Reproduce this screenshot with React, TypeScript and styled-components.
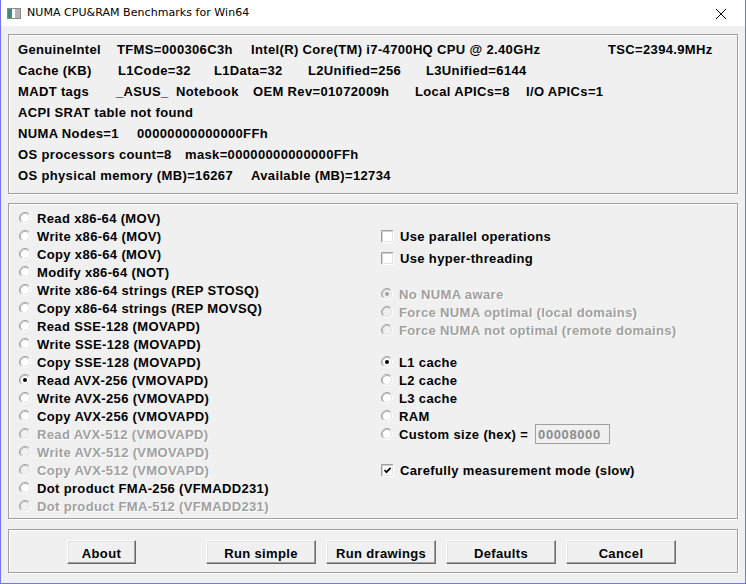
import React from "react";
import styled, { createGlobalStyle } from "styled-components";

const Global = createGlobalStyle`
  html, body { margin: 0; padding: 0; background: #f0f0f0; }
  body { font-family: "Liberation Sans", Arial, sans-serif; }
`;

const Window = styled.div`
  width: 746px;
  height: 584px;
  box-sizing: border-box;
  border: 1px solid #7474f2;
  border-top: none;
  background: #f0f0f0;
  display: flex;
  flex-direction: column;
`;

const TitleBar = styled.div`
  height: 26px;
  flex: none;
  background: #ffffff;
  display: flex;
  align-items: center;
  padding-left: 5px;
  padding-right: 12px;
`;

const TitleText = styled.span`
  font-family: "DejaVu Sans", "Noto Sans", sans-serif;
  font-size: 11px;
  letter-spacing: 0.05px;
  color: #000;
  margin-left: 5px;
  flex: 1;
  padding-bottom: 1px;
`;

const CloseBtn = styled.div`
  width: 14px;
  height: 14px;
  display: flex;
  align-items: center;
  justify-content: center;
  margin-right: 5px;
  margin-top: 1px;
`;

const Body = styled.div`
  flex: 1;
  display: flex;
  flex-direction: column;
  padding: 8px 7px 0 7px;
`;

const Group = styled.div<{ $h: number; $mt?: number }>`
  box-sizing: border-box;
  height: ${(p) => p.$h}px;
  margin-top: ${(p) => p.$mt ?? 0}px;
  border: 1px solid #a0a0a0;
  box-shadow: 1px 1px 0 #ffffff, inset 1px 1px 0 #ffffff;
  font-weight: bold;
  font-size: 13px;
  letter-spacing: 0.35px;
  color: #000;
`;

const InfoGroup = styled(Group)`
  padding: 4px 0 0 9px;
`;

const InfoRow = styled.div`
  height: 21px;
  display: flex;
  align-items: center;
  white-space: nowrap;
`;

const Field = styled.span<{ $w?: number }>`
  flex: none;
  width: ${(p) => (p.$w ? `${p.$w}px` : "auto")};
`;

const OptionsGroup = styled(Group)`
  padding: 5px 0 0 10px;
  display: grid;
  grid-template-columns: 362px 1fr;
  align-items: start;
`;

const Column = styled.div`
  display: flex;
  flex-direction: column;
`;

const Row = styled.div<{ $mt?: number; $disabled?: boolean }>`
  height: 18px;
  display: flex;
  align-items: center;
  white-space: nowrap;
  margin-top: ${(p) => p.$mt ?? 0}px;
  color: ${(p) => (p.$disabled ? "#a0a0a0" : "#000")};
  text-shadow: ${(p) => (p.$disabled ? "1px 1px 0 #ffffff" : "none")};
`;

const Label = styled.span`
  margin-left: 6px;
`;

const HexBox = styled.div`
  box-sizing: border-box;
  width: 75px;
  height: 20px;
  margin-left: 7px;
  border: 1px solid #a0a0a0;
  background: #f0f0f0;
  color: #8c8c8c;
  font-weight: bold;
  display: flex;
  align-items: center;
  padding-left: 2px;
  letter-spacing: 0.6px;
`;

const ButtonGroup = styled(Group)`
  display: flex;
  align-items: flex-start;
  padding: 10px 0 0 58px;
  gap: 10px;
`;

const Button = styled.button<{ $w: number; $ml?: number }>`
  box-sizing: border-box;
  width: ${(p) => p.$w}px;
  height: 24px;
  margin-left: ${(p) => p.$ml ?? 0}px;
  background: #f0f0f0;
  border: 1px solid;
  border-color: #ffffff #696969 #696969 #ffffff;
  box-shadow: inset -1px -1px 0 #a0a0a0, inset 1px 1px 0 #e3e3e3;
  font-family: "Liberation Sans", Arial, sans-serif;
  font-weight: bold;
  font-size: 13px;
  letter-spacing: 0.35px;
  color: #000;
  padding: 2px 0 0 0;
  cursor: default;
`;

function Radio({ checked, disabled }: { checked?: boolean; disabled?: boolean }) {
  return (
    <svg width="12" height="12" viewBox="0 0 12 12" style={{ flex: "none" }}>
      <circle cx="6" cy="6" r="4.5" fill={disabled ? "#f0f0f0" : "#ffffff"} />
      <path d="M2.11 9.89 A5.5 5.5 0 0 1 9.89 2.11" stroke="#a0a0a0" strokeWidth="1" fill="none" />
      <path d="M9.89 2.11 A5.5 5.5 0 0 1 2.11 9.89" stroke="#ffffff" strokeWidth="1" fill="none" />
      <path d="M2.82 9.18 A4.5 4.5 0 0 1 9.18 2.82" stroke="#bcbcbc" strokeWidth="1" fill="none" />
      <path d="M9.18 2.82 A4.5 4.5 0 0 1 2.82 9.18" stroke="#e3e3e3" strokeWidth="1" fill="none" />
      {checked && <circle cx="6" cy="6" r="2" fill={disabled ? "#a0a0a0" : "#000"} />}
    </svg>
  );
}

function Check({ checked }: { checked?: boolean }) {
  return (
    <svg width="13" height="13" viewBox="0 0 13 13" style={{ flex: "none" }}>
      <rect x="0" y="0" width="13" height="13" fill="#ffffff" />
      <path d="M0.5 12.5 V0.5 H12.5" stroke="#a0a0a0" fill="none" />
      <path d="M1.5 11.5 V1.5 H11.5" stroke="#d0d0d0" fill="none" />
      <path d="M12.5 0.5 V12.5 H0.5" stroke="#ffffff" fill="none" />
      <path d="M11.5 1.5 V11.5 H1.5" stroke="#e3e3e3" fill="none" />
      {checked && (
        <path d="M3.5 6 L5.5 8.2 L9.6 3.8" stroke="#000" strokeWidth="1.7" fill="none" />
      )}
    </svg>
  );
}

function AppIcon() {
  return (
    <svg width="16" height="16" viewBox="0 0 16 16" style={{ flex: "none" }}>
      <rect x="1.5" y="3.5" width="13" height="10" fill="#d8d8d8" stroke="#8a8a8a" />
      <rect x="2" y="4" width="4" height="9" fill="#3c8c7c" />
      <rect x="6" y="4" width="3" height="9" fill="#ffffff" />
      <rect x="9" y="4" width="5" height="9" fill="#b4b4b4" />
    </svg>
  );
}

const leftItems: { t: string; checked?: boolean; disabled?: boolean }[] = [
  { t: "Read x86-64 (MOV)" },
  { t: "Write x86-64 (MOV)" },
  { t: "Copy x86-64 (MOV)" },
  { t: "Modify x86-64 (NOT)" },
  { t: "Write x86-64 strings (REP STOSQ)" },
  { t: "Copy x86-64 strings (REP MOVSQ)" },
  { t: "Read SSE-128 (MOVAPD)" },
  { t: "Write SSE-128 (MOVAPD)" },
  { t: "Copy SSE-128 (MOVAPD)" },
  { t: "Read AVX-256 (VMOVAPD)", checked: true },
  { t: "Write AVX-256 (VMOVAPD)" },
  { t: "Copy AVX-256 (VMOVAPD)" },
  { t: "Read AVX-512 (VMOVAPD)", disabled: true },
  { t: "Write AVX-512 (VMOVAPD)", disabled: true },
  { t: "Copy AVX-512 (VMOVAPD)", disabled: true },
  { t: "Dot product FMA-256 (VFMADD231)" },
  { t: "Dot product FMA-512 (VFMADD231)", disabled: true },
];

const infoRows: [string, number?][][] = [
  [["GenuineIntel", 99], ["TFMS=000306C3h", 134], ["Intel(R) Core(TM) i7-4700HQ CPU @ 2.40GHz", 357], ["TSC=2394.9MHz"]],
  [["Cache (KB)", 100], ["L1Code=32", 96], ["L1Data=32", 94], ["L2Unified=256", 118], ["L3Unified=6144"]],
  [["MADT tags", 98], ["_ASUS_", 60], ["Notebook", 77], ["OEM Rev=01072009h", 162], ["Local APICs=8", 111], ["I/O APICs=1"]],
  [["ACPI SRAT table not found"]],
  [["NUMA Nodes=1", 119], ["00000000000000FFh"]],
  [["OS processors count=8", 167], ["mask=00000000000000FFh"]],
  [["OS physical memory (MB)=16267", 233], ["Available (MB)=12734"]],
];

export default function App() {
  return (
    <Window>
      <Global />
      <TitleBar>
        <AppIcon />
        <TitleText>NUMA CPU&amp;RAM Benchmarks for Win64</TitleText>
        <CloseBtn>
          <svg width="12" height="12" viewBox="0 0 12 12">
            <path d="M1 1 L11 11 M11 1 L1 11" stroke="#000" strokeWidth="1" />
          </svg>
        </CloseBtn>
      </TitleBar>
      <Body>
        <InfoGroup $h={160}>
          {infoRows.map((row, i) => (
            <InfoRow key={i}>
              {row.map(([t, w], j) => (
                <Field key={j} $w={w}>
                  {t}
                </Field>
              ))}
            </InfoRow>
          ))}
        </InfoGroup>
        <OptionsGroup $h={316} $mt={9}>
          <Column>
            {leftItems.map((it) => (
              <Row key={it.t} $disabled={it.disabled}>
                <Radio checked={it.checked} disabled={it.disabled} />
                <Label>{it.t}</Label>
              </Row>
            ))}
          </Column>
          <Column>
            <Row $mt={18}>
              <Check />
              <Label>Use parallel operations</Label>
            </Row>
            <Row $mt={4}>
              <Check />
              <Label>Use hyper-threading</Label>
            </Row>
            <Row $mt={18} $disabled>
              <Radio checked disabled />
              <Label>No NUMA aware</Label>
            </Row>
            <Row $disabled>
              <Radio disabled />
              <Label>Force NUMA optimal (local domains)</Label>
            </Row>
            <Row $disabled>
              <Radio disabled />
              <Label>Force NUMA not optimal (remote domains)</Label>
            </Row>
            <Row $mt={14}>
              <Radio checked />
              <Label>L1 cache</Label>
            </Row>
            <Row>
              <Radio />
              <Label>L2 cache</Label>
            </Row>
            <Row>
              <Radio />
              <Label>L3 cache</Label>
            </Row>
            <Row>
              <Radio />
              <Label>RAM</Label>
            </Row>
            <Row>
              <Radio />
              <Label>Custom size (hex) =</Label>
              <HexBox>00008000</HexBox>
            </Row>
            <Row $mt={18}>
              <Check checked />
              <Label>Carefully measurement mode (slow)</Label>
            </Row>
          </Column>
        </OptionsGroup>
        <ButtonGroup $h={44} $mt={10}>
          <Button $w={69}>About</Button>
          <Button $w={110} $ml={60}>Run simple</Button>
          <Button $w={110}>Run drawings</Button>
          <Button $w={110}>Defaults</Button>
          <Button $w={110}>Cancel</Button>
        </ButtonGroup>
      </Body>
    </Window>
  );
}
